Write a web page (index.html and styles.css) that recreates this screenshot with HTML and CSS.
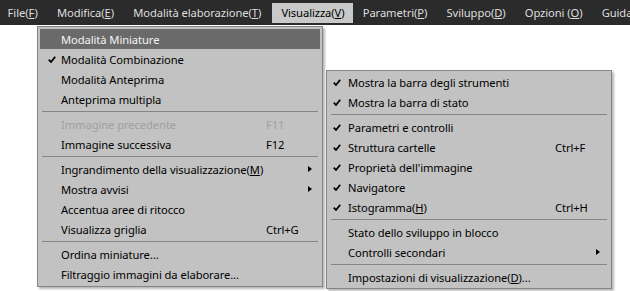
FILE: index.html
```html
<!DOCTYPE html>
<html lang="it">
<head>
<meta charset="utf-8">
<title>Visualizza</title>
<link rel="stylesheet" href="styles.css">
</head>
<body>
<div class="screen">
  <nav class="menubar">
    <span class="mb-item">File(<u>F</u>)</span>
    <span class="mb-item">Modifica(<u>E</u>)</span>
    <span class="mb-item">Modalità elaborazione(<u>T</u>)</span>
    <span class="mb-item mb-active">Visualizza(<u>V</u>)</span>
    <span class="mb-item">Parametri(<u>P</u>)</span>
    <span class="mb-item">Sviluppo(<u>D</u>)</span>
    <span class="mb-item">Opzioni (<u>O</u>)</span>
    <span class="mb-item">Guida</span>
  </nav>
  <div class="workspace">
    <div class="menu menu-main">
      <div class="row hl"><span class="chk"></span><span class="lbl">Modalità Miniature</span><span class="sc"></span><span class="arr"></span></div>
      <div class="row"><span class="chk"><svg width="8" height="7" viewBox="0 0 8 7"><path d="M0.8 3.6 L3 6 L7.2 0.8" fill="none" stroke="#000" stroke-width="1.8"/></svg></span><span class="lbl">Modalità Combinazione</span><span class="sc"></span><span class="arr"></span></div>
      <div class="row"><span class="chk"></span><span class="lbl">Modalità Anteprima</span><span class="sc"></span><span class="arr"></span></div>
      <div class="row"><span class="chk"></span><span class="lbl">Anteprima multipla</span><span class="sc"></span><span class="arr"></span></div>
      <div class="sep"></div>
      <div class="row dis"><span class="chk"></span><span class="lbl">Immagine precedente</span><span class="sc">F11</span><span class="arr"></span></div>
      <div class="row"><span class="chk"></span><span class="lbl">Immagine successiva</span><span class="sc">F12</span><span class="arr"></span></div>
      <div class="sep"></div>
      <div class="row"><span class="chk"></span><span class="lbl">Ingrandimento della visualizzazione(<u>M</u>)</span><span class="sc"></span><span class="arr"><i class="tri"></i></span></div>
      <div class="row"><span class="chk"></span><span class="lbl">Mostra avvisi</span><span class="sc"></span><span class="arr"><i class="tri"></i></span></div>
      <div class="row"><span class="chk"></span><span class="lbl">Accentua aree di ritocco</span><span class="sc"></span><span class="arr"></span></div>
      <div class="row"><span class="chk"></span><span class="lbl">Visualizza griglia</span><span class="sc">Ctrl+G</span><span class="arr"></span></div>
      <div class="sep"></div>
      <div class="row"><span class="chk"></span><span class="lbl">Ordina miniature...</span><span class="sc"></span><span class="arr"></span></div>
      <div class="row"><span class="chk"></span><span class="lbl">Filtraggio immagini da elaborare...</span><span class="sc"></span><span class="arr"></span></div>
    </div>
    <div class="menu menu-sub">
      <div class="row"><span class="chk"><svg width="8" height="7" viewBox="0 0 8 7"><path d="M0.8 3.6 L3 6 L7.2 0.8" fill="none" stroke="#000" stroke-width="1.8"/></svg></span><span class="lbl">Mostra la barra degli strumenti</span><span class="sc"></span><span class="arr"></span></div>
      <div class="row"><span class="chk"><svg width="8" height="7" viewBox="0 0 8 7"><path d="M0.8 3.6 L3 6 L7.2 0.8" fill="none" stroke="#000" stroke-width="1.8"/></svg></span><span class="lbl">Mostra la barra di stato</span><span class="sc"></span><span class="arr"></span></div>
      <div class="sep"></div>
      <div class="row"><span class="chk"><svg width="8" height="7" viewBox="0 0 8 7"><path d="M0.8 3.6 L3 6 L7.2 0.8" fill="none" stroke="#000" stroke-width="1.8"/></svg></span><span class="lbl">Parametri e controlli</span><span class="sc"></span><span class="arr"></span></div>
      <div class="row"><span class="chk"><svg width="8" height="7" viewBox="0 0 8 7"><path d="M0.8 3.6 L3 6 L7.2 0.8" fill="none" stroke="#000" stroke-width="1.8"/></svg></span><span class="lbl">Struttura cartelle</span><span class="sc">Ctrl+F</span><span class="arr"></span></div>
      <div class="row"><span class="chk"><svg width="8" height="7" viewBox="0 0 8 7"><path d="M0.8 3.6 L3 6 L7.2 0.8" fill="none" stroke="#000" stroke-width="1.8"/></svg></span><span class="lbl">Proprietà dell'immagine</span><span class="sc"></span><span class="arr"></span></div>
      <div class="row"><span class="chk"><svg width="8" height="7" viewBox="0 0 8 7"><path d="M0.8 3.6 L3 6 L7.2 0.8" fill="none" stroke="#000" stroke-width="1.8"/></svg></span><span class="lbl">Navigatore</span><span class="sc"></span><span class="arr"></span></div>
      <div class="row"><span class="chk"><svg width="8" height="7" viewBox="0 0 8 7"><path d="M0.8 3.6 L3 6 L7.2 0.8" fill="none" stroke="#000" stroke-width="1.8"/></svg></span><span class="lbl">Istogramma(<u>H</u>)</span><span class="sc">Ctrl+H</span><span class="arr"></span></div>
      <div class="sep"></div>
      <div class="row"><span class="chk"></span><span class="lbl">Stato dello sviluppo in blocco</span><span class="sc"></span><span class="arr"></span></div>
      <div class="row"><span class="chk"></span><span class="lbl">Controlli secondari</span><span class="sc"></span><span class="arr"><i class="tri"></i></span></div>
      <div class="sep"></div>
      <div class="row"><span class="chk"></span><span class="lbl">Impostazioni di visualizzazione(<u>D</u>)...</span><span class="sc"></span><span class="arr"></span></div>
    </div>
  </div>
</div>
</body>
</html>
```

FILE: styles.css
```css
* { box-sizing: border-box; }
html, body { margin: 0; padding: 0; background: #ffffff; }
body {
  width: 630px;
  height: 291px;
  overflow: hidden;
  font-family: "Noto Sans", "Open Sans", sans-serif;
  font-size: 11.2px;
  letter-spacing: -0.08px;
}
u { text-decoration: underline; text-underline-offset: 1px; }

.screen { position: relative; width: 630px; height: 291px; }

.menubar {
  display: flex;
  align-items: center;
  height: 25px;
  background: #2b2b2b;
  color: #dedede;
  margin-left: -2px;
}
.mb-item {
  padding: 0 9.6px;
  height: 20px;
  line-height: 20px;
  white-space: nowrap;
}
.mb-active { background: #c9c9c9; color: #000; margin-left: 1px; padding: 0 8.6px 0 9.6px; }

.workspace { position: relative; height: 266px; }

.menu {
  position: absolute;
  width: 286px;
  background: #c2c2c2;
  border: 1px solid #858585;
  box-shadow: 2px 2px 2px rgba(0, 0, 0, 0.28);
  color: #000;
  padding: 2px 1px;
}
.menu-main { left: 37px; top: 1px; }
.menu-sub { left: 326px; top: 45px; padding: 1px 1px 1px; }

.row {
  display: grid;
  grid-template-columns: 21px 205px 40px 1fr;
  align-items: center;
  height: 20px;
  margin: 0 1px;
  white-space: nowrap;
}
.menu-sub .row { grid-template-columns: 19px 207px 39px 1fr; }
.row.hl { background: #6a6a6a; color: #f4f4f4; }
.row.dis { color: #a0a0a0; }
.chk { display: flex; align-items: center; padding-left: 8px; height: 20px; }
.menu-sub .chk { padding-left: 4px; }
.arr { display: flex; align-items: center; padding-left: 2px; }
.tri {
  display: block;
  width: 0; height: 0;
  border-top: 3.5px solid transparent;
  border-bottom: 3.5px solid transparent;
  border-left: 4px solid #000;
}
.sep {
  height: 5px;
  margin: 0 3px;
  display: flex;
  align-items: center;
}
.sep::before {
  content: "";
  display: block;
  width: 100%;
  height: 1px;
  background: #858585;
}
```
